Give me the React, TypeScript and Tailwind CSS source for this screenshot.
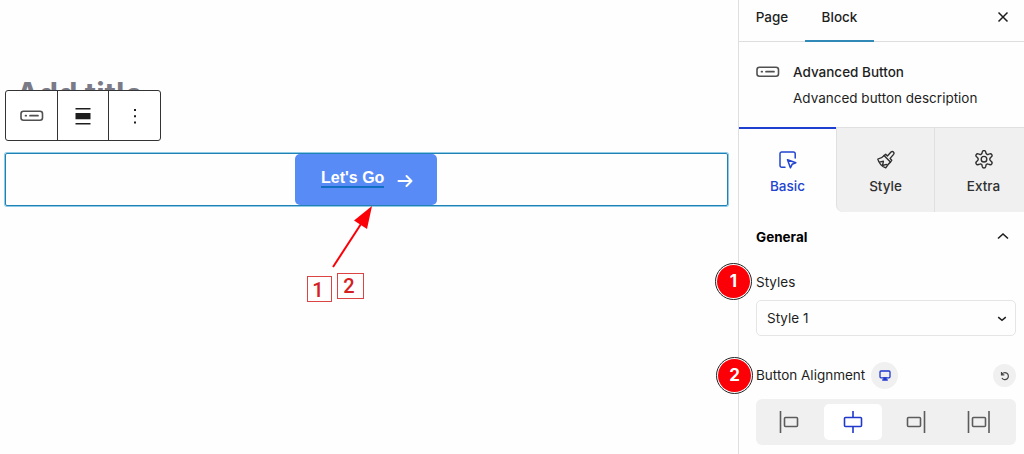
import React from 'react';

const AdvancedButtonIcon: React.FC<{ className?: string }> = ({ className = '' }) => (
  <svg width="24" height="12" viewBox="0 0 24 12" fill="none" stroke="#505050" className={className}>
    <rect x="1" y="1.2" width="21.5" height="9" rx="2.5" strokeWidth="1.6" />
    <path d="M5.500 5.700h.7M10 5.700h8" strokeWidth="1.7" strokeLinecap="round" />
  </svg>
);

const BasicIcon = () => (
  <svg width="20" height="20" viewBox="0 0 20 20" fill="none" stroke="currentColor" strokeWidth="1.5" strokeLinecap="round" strokeLinejoin="round">
    <path d="M17.2 8V3.7a1.7 1.7 0 0 0-1.7-1.7H3.7a1.7 1.7 0 0 0-1.7 1.7v11.8a1.7 1.7 0 0 0 1.7 1.7H7" />
    <path d="M9.500 9.800l8.300 3-3.700 1.500-1.700 3.500z" />
  </svg>
);

const StyleIcon = () => (
  <svg width="20" height="20" viewBox="0 0 20 20" fill="none" stroke="currentColor" strokeWidth="1.4" strokeLinecap="round" strokeLinejoin="round">
    <path d="M8 5.600l1.700-1.300 1.700 1.600L15 2.100c1.700-1.500 4 .5 2.600 2.300l-3.500 4 1.600 1.900-1.300 1.800z" />
    <path d="M8 5.600C6.300 7.800 4.200 8.700 1.800 9.100c1.200 4 3.900 7.300 7.900 8.800 1.600-2.700 2.800-4.200 4.700-5.800M3.300 12.100l4.100-.8-.9 4.200 3.900-1.100" />
  </svg>
);

const ExtraIcon = () => (
  <svg width="20" height="20" viewBox="0 0 20 20" fill="none" stroke="currentColor" strokeWidth="1.4" strokeLinejoin="round">
    <path d="M8.3 1.900a1.740 1.740 0 0 1 3.400 0l.3 1.400a1.700 1.700 0 0 0 2.300 1l1.300-.4a1.720 1.720 0 0 1 1.800 2.900l-1 1.100a1.700 1.700 0 0 0 0 2.600l1 1.100a1.720 1.720 0 0 1-1.800 2.900l-1.300-.4a1.700 1.700 0 0 0-2.300 1l-.3 1.600a1.740 1.740 0 0 1-3.400 0L8 15.100a1.700 1.700 0 0 0-2.300-1l-1.300.4a1.720 1.720 0 0 1-1.800-2.900l1-1.100a1.700 1.700 0 0 0 0-2.600l-1-1.100A1.720 1.720 0 0 1 4.400 3.900l1.300.4A1.700 1.700 0 0 0 8 3.300z" />
    <circle cx="10" cy="9.200" r="2.800" />
  </svg>
);

type Align = 'left' | 'center' | 'right' | 'justify';

const AlignIcon: React.FC<{ type: Align }> = ({ type }) => (
  <svg width="24" height="24" viewBox="0 0 24 24" fill="none" stroke="currentColor" strokeWidth="1.6">
    {type === 'left' && (
      <>
        <path d="M2.500 1v22" />
        <rect x="6.500" y="7.500" width="13" height="9" rx="1" />
      </>
    )}
    {type === 'center' && (
      <>
        <path d="M12 1v6.500M12 16.500V23" />
        <rect x="3.500" y="7.500" width="17" height="9" rx="1" />
      </>
    )}
    {type === 'right' && (
      <>
        <path d="M21.500 1v22" />
        <rect x="4.500" y="7.500" width="13" height="9" rx="1" />
      </>
    )}
    {type === 'justify' && (
      <>
        <path d="M2.500 1v22M23 1v22" />
        <rect x="6.500" y="7.500" width="13" height="9" rx="1" />
      </>
    )}
  </svg>
);

const tabs = [
  { id: 'basic', label: 'Basic', icon: <BasicIcon /> },
  { id: 'style', label: 'Style', icon: <StyleIcon /> },
  { id: 'extra', label: 'Extra', icon: <ExtraIcon /> },
];

const alignments: Align[] = ['left', 'center', 'right', 'justify'];

const StepBadge: React.FC<{ step: number; className?: string }> = ({ step, className = '' }) => (
  <span
    className={`absolute flex h-[37px] w-[37px] items-center justify-center rounded-full border border-[#222] bg-white p-[1px] ${className}`}
  >
    <span className="flex h-full w-full items-center justify-center rounded-full bg-[#fb0007] text-[17px] font-bold text-white">
      {step}
    </span>
  </span>
);

const Toolbar = () => (
  <div className="relative -mt-[14px] ml-[5px] flex h-[51px] w-[156px] divide-x divide-[#333] rounded-[3px] border border-[#333] bg-white text-[#1e1e1e]">
    <button className="flex w-[52px] items-center justify-center">
      <AdvancedButtonIcon />
    </button>
    <button className="flex w-[51px] items-center justify-center">
      <svg width="16" height="18" viewBox="0 0 16 18" fill="currentColor">
        <path d="M.5 1h15v1.500H.5zM.5 6h15v6.200H.5zM.5 16h15v1.500H.5z" />
      </svg>
    </button>
    <button className="flex flex-1 items-center justify-center">
      <svg width="4" height="18" viewBox="0 0 4 18" fill="currentColor">
        <path d="M1 2h2v2H1zM1 8.200h2v2H1zM1 14.400h2v2H1z" />
      </svg>
    </button>
  </div>
);

const Editor = () => (
  <main className="relative w-[738px] shrink-0">
    <h1 className="ml-[16px] mt-[76px] h-7 whitespace-nowrap pt-[4px] text-[31px] leading-7 font-bold text-[#7b7b88]">
      Add title
    </h1>
    <Toolbar />
    <div className="ml-[5px] mt-[12px] flex h-[53px] w-[723px] justify-center rounded-[2px] border border-[#1f81b4] ring-1 ring-[#8fcbe6]">
      <a className="mr-[1px] flex w-[142px] items-center rounded-[5px] bg-[#598bf7] pl-[26px] font-['Liberation_Sans',sans-serif] text-white">
        <span className="-mt-[2px] border-b-2 border-[#1270c4] text-[16px] leading-[17px] font-bold">
          Let's Go
        </span>
        <svg width="16" height="14" viewBox="0 0 16 14" fill="none" stroke="currentColor" strokeWidth="2" strokeLinecap="round" strokeLinejoin="round" className="mt-[2px] ml-[13px]">
          <path d="M1.500 7h13M9.500 2l5 5-5 5" />
        </svg>
      </a>
    </div>

    {/* Callout pointing at the button */}
    <svg width="46" height="64" viewBox="0 0 46 64" className="absolute left-[330px] top-[205px]">
      <path d="M3 62L31 19" stroke="#fb0007" strokeWidth="2" />
      <path d="M42 1L24 15.500L37 24z" fill="#fb0007" />
    </svg>
    <span className="absolute left-[307px] top-[276px] flex h-[26px] w-[25px] items-center justify-center border border-[#dc4444] pr-[3px] pt-px font-['Roboto',sans-serif] text-[20px] font-medium text-[#d42020]">
      1
    </span>
    <span className="absolute left-[337px] top-[273px] flex h-[26px] w-[27px] items-center justify-center border border-[#dc4444] pr-[3px] font-['Roboto',sans-serif] text-[20px] font-medium text-[#d42020]">
      2
    </span>
  </main>
);

const Sidebar = () => (
  <aside className="relative w-[286px] shrink-0 border-l border-[#dfdfdf] text-[13.500px] text-[#1e1e1e]">
    <header className="flex h-[42px] border-b border-[#dedede] font-medium">
      <button className="w-[66px] pb-[6px]">Page</button>
      <button className="-mb-px w-[69px] border-b-2 border-[#3089b7] pb-[5px]">Block</button>
      <button className="mr-[15px] mb-[8px] ml-auto">
        <svg width="12" height="12" viewBox="0 0 12 12" fill="none" stroke="currentColor" strokeWidth="1.5">
          <path d="M1.500 1.500l9 9M10.500 1.500l-9 9" />
        </svg>
      </button>
    </header>

    <section className="flex h-[85px] gap-[13px] pl-[17px] pt-[20px]">
      <AdvancedButtonIcon className="mt-[4px]" />
      <div>
        <h2 className="leading-5 font-medium">Advanced Button</h2>
        <p className="mt-[6px] leading-5">Advanced button description</p>
      </div>
    </section>

    <nav className="grid h-[85px] grid-cols-[97px_98px_90px]">
      {tabs.map((tab, i) => (
        <button
          key={tab.id}
          className={`flex flex-col items-center font-medium ${
            i === 0
              ? 'border-t-2 border-[#1f3fd0] pt-[21px] text-[#2244cf]'
              : 'border-t border-l border-[#e0e0e0] bg-[#f0f0f0] pt-[22px] text-[#2f2f2f]'
          } ${i === 1 ? 'rounded-bl-[7px]' : ''} ${i === 2 ? 'pl-[8px]' : ''}`}
        >
          {tab.icon}
          <span className="mt-[6px] leading-5">{tab.label}</span>
        </button>
      ))}
    </nav>

    <div className="pr-[8px] pl-[17px]">
      <div className="flex h-[50px] items-center justify-between">
        <h3 className="mt-px font-bold text-black">General</h3>
        <svg width="12" height="8" viewBox="0 0 12 8" fill="none" stroke="currentColor" strokeWidth="1.6" className="mr-[7px] mb-[3px]">
          <path d="M1 6.500L6 2l5 4.500" />
        </svg>
      </div>

      <div className="mt-[10px] h-5 leading-5">Styles</div>
      <div className="mt-[8px] flex h-[36px] items-center justify-between rounded-[5px] border border-[#e5e5e5] pr-[8px] pl-[10px]">
        <span className="mt-px">Style 1</span>
        <svg width="10" height="6" viewBox="0 0 10 6" fill="none" stroke="currentColor" strokeWidth="1.5" className="mt-px">
          <path d="M1.200 1.200L5 4.300l3.800-3.100" />
        </svg>
      </div>

      <div className="mt-[26px] flex h-[27px] items-center">
        <span>Button Alignment</span>
        <span className="ml-[6px] flex h-[27px] w-[27px] items-center justify-center rounded-full bg-[#f0f0f0] text-[#2038cc]">
          <svg width="12" height="11" viewBox="0 0 12 11" fill="none" stroke="currentColor" strokeWidth="1.3">
            <rect x="1" y="1" width="10" height="6.800" rx="1" />
            <path d="M5 8h2v1.500H5zM3.200 10h5.600" />
          </svg>
        </span>
        <span className="ml-auto flex h-[23px] w-[23px] items-center justify-center rounded-full bg-[#f0f0f0]">
          <svg width="10" height="10" viewBox="0 0 10 10" fill="none" stroke="#444" strokeWidth="1.2">
            <path d="M1.500 1v2.800h2.800M1.700 3.700a3.500 3.500 0 1 1 .2 3.300" />
          </svg>
        </span>
      </div>

      <div className="mt-[10px] grid h-[46px] grid-cols-4 rounded-[6px] bg-[#f0f0f0] p-[5px]">
        {alignments.map((type) => (
          <button
            key={type}
            className={`mr-[4px] flex items-center justify-center rounded-[5px] ${
              type === 'center' ? 'bg-white text-[#2038cc]' : 'text-[#5c5c5c]'
            }`}
          >
            <AlignIcon type={type} />
          </button>
        ))}
      </div>
    </div>

    <StepBadge step={1} className="top-[263px] -left-[24px]" />
    <StepBadge step={2} className="top-[357px] -left-[23px]" />
  </aside>
);

export default function App() {
  return (
    <div className="flex h-[454px] w-[1024px] overflow-hidden bg-[#fefefe] font-['Inter',sans-serif]">
      <Editor />
      <Sidebar />
    </div>
  );
}
